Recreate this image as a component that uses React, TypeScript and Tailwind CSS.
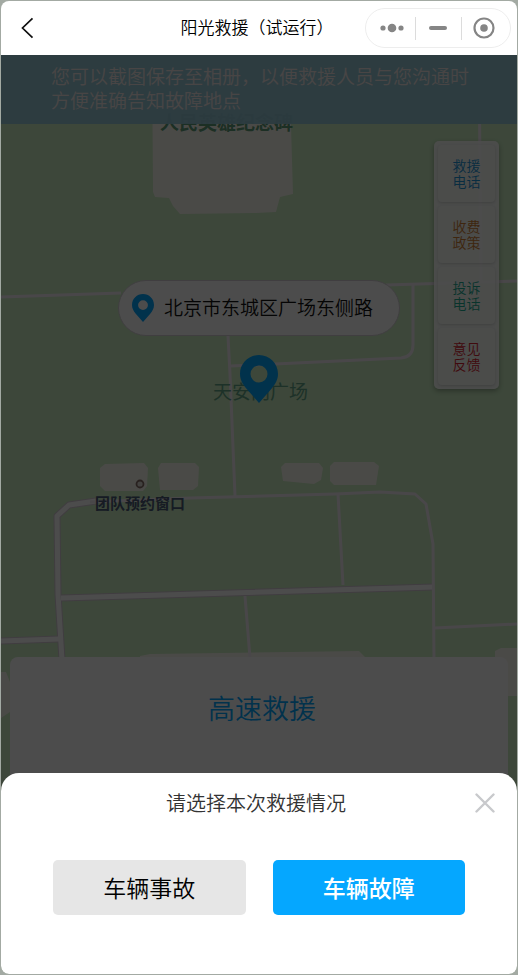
import { useState } from 'react';

const contacts = [
  { label: '救援电话', color: 'text-[#2196d9]' },
  { label: '收费政策', color: 'text-[#d08032]' },
  { label: '投诉电话', color: 'text-[#1fae95]' },
  { label: '意见反馈', color: 'text-[#d8232f]' },
];

function Pin({ className }: { className: string }) {
  return (
    <svg viewBox="0 0 38 48" className={className} fill="#05a7ff" aria-hidden="true">
      <path
        fillRule="evenodd"
        d="M19 0C8.500 0 0 8.300 0 18.800c0 6 2.600 10.200 6.500 15L19 48l12.500-14.200c3.900-4.800 6.500-9 6.500-15C38 8.300 29.500 0 19 0zm0 10.500a8.500 8.500 0 1 1 0 17 8.500 8.500 0 0 1 0-17z"
      />
    </svg>
  );
}

function Header() {
  return (
    <header className="relative flex h-[54px] shrink-0 items-center justify-center bg-white">
      <button type="button" aria-label="返回" className="absolute left-[18px] flex h-8 w-4 items-center">
        <svg viewBox="0 0 16 24" className="h-6 w-4" fill="none" stroke="#111" strokeWidth="1.700">
          <path d="M13.500 2.300 3.500 12l10 9.700" />
        </svg>
      </button>
      <h1 className="pr-1 pb-[2px] text-[17px] leading-6 font-[350] text-black">阳光救援（试运行）</h1>
      <div className="absolute right-[6px] flex h-10 w-[146px] items-center rounded-full border border-[#ededed]">
        <button type="button" aria-label="更多" className="flex flex-1 justify-center pl-1">
          <svg viewBox="0 0 24 10" className="h-[10px] w-6" fill="#858585">
            <circle cx="3" cy="5" r="2.600" />
            <circle cx="12" cy="5" r="4.300" />
            <circle cx="21" cy="5" r="2.600" />
          </svg>
        </button>
        <span className="h-[23px] w-px bg-[#dcdcdc]" />
        <button type="button" aria-label="最小化" className="flex w-[45px] justify-center">
          <svg viewBox="0 0 18 4" className="h-1 w-[18px]">
            <rect width="18" height="4" rx="2" fill="#858585" />
          </svg>
        </button>
        <span className="h-[23px] w-px bg-[#dcdcdc]" />
        <button type="button" aria-label="关闭小程序" className="flex flex-1 justify-center pr-1">
          <svg viewBox="0 0 22 22" className="size-[22px]">
            <circle cx="11" cy="11" r="9.500" fill="none" stroke="#858585" strokeWidth="2.200" />
            <circle cx="11" cy="11" r="3.800" fill="#858585" />
          </svg>
        </button>
      </div>
    </header>
  );
}

function MapView() {
  return (
    <svg
      viewBox="1 55 516 919"
      preserveAspectRatio="xMidYMin slice"
      className="absolute inset-0 h-full w-full bg-[#cbeec2]"
      aria-hidden="true"
    >
      <g fill="#fbf8f0" fillOpacity="0.95">
        <path d="M152 55h138l1 70 2 69-13 3-4 15-20 1-76 1-7-8-4-8-14-1-2-5z" />
        <path d="M105 464l39-1 4 5-1 18-4 5h-38l-5-5v-18z" />
        <path d="M161 463h34l4 4-1 19-5 4h-33l-2-22z" />
        <path d="M285 463h34l4 5-2 12-7 4-31-3-2-14z" />
        <path d="M334 462h40l5 4-3 19h-42l-4-4v-15z" />
        <path d="M140 656l10-2 209-3 7 7-226 3z" />
        <path d="M495 651l6-3h16v48h-10l-12-10z" />
        <path d="M1 672h5l4 10v30l-9 6z" />
      </g>
      <g fill="none" stroke="#d7cbd7" strokeLinejoin="round">
        <path d="M1 641l58-2M61 598l373-11" strokeWidth="7" />
        <path d="M62 660l-4-66-1-78 12-11 27-4" strokeWidth="7" />
      </g>
      <g fill="none" stroke="#fff" strokeLinejoin="round">
        <path d="M1 641l58-2M61 598l373-11" strokeWidth="5" />
        <path d="M62 660l-4-66-1-78 12-11 27-4" strokeWidth="5" />
      </g>
      <g fill="none" stroke="#f5eef5" strokeWidth="3" strokeLinejoin="round">
        <path d="M90 502l100-4 145-4 45-2 35 2 11 10 7 40 1 116" />
        <path d="M228 336l2 38 5 122M231 366l170-8q12-1 12-13v-60" />
        <path d="M1 297l120-4M386 285l131-4M479 55l2 227" />
        <path d="M338 494l5 91M245 596l5 62M435 628l82-4" />
      </g>
      <circle cx="140" cy="484" r="3.500" fill="#e0dcd6" stroke="#86716a" strokeWidth="1.800" />
      <text x="160" y="130" fontSize="19" fontWeight="700" fill="#5f9d79">人民英雄纪念碑</text>
      <text x="213" y="399" fontSize="19" fill="#62a586">天安门广场</text>
      <text x="95" y="509" fontSize="15" fontWeight="700" fill="#4b5a77">团队预约窗口</text>
    </svg>
  );
}

function ContactPanel() {
  return (
    <nav className="absolute top-[86px] right-[18px] flex w-[65px] flex-col gap-1 rounded-[5px] bg-white/90 p-1 shadow-[0_2px_5px_rgba(0,0,0,0.3)]">
      {contacts.map((item) => (
        <button
          key={item.label}
          type="button"
          className={`flex h-[57px] items-center justify-center rounded pb-[2px] text-[14px] leading-4 font-[350] shadow-[0_1px_3px_rgba(0,0,0,0.15)] ${item.color}`}
        >
          <span className="w-7">{item.label}</span>
        </button>
      ))}
    </nav>
  );
}

function RescueSheet({ onClose }: { onClose: () => void }) {
  const [selected, setSelected] = useState('fault');

  const options = [
    { id: 'accident', label: '车辆事故' },
    { id: 'fault', label: '车辆故障' },
  ];

  return (
    <div className="absolute inset-0 flex flex-col justify-end bg-black/70">
      <section role="dialog" aria-labelledby="sheet-title" className="relative rounded-t-[18px] bg-white px-[52px] pt-[18px] pb-[59px]">
        <h2 id="sheet-title" className="pr-[6px] text-center text-[20px] leading-6 font-[350] text-[#333]">
          请选择本次救援情况
        </h2>
        <button type="button" aria-label="关闭" onClick={onClose} className="absolute top-5 right-[22px]">
          <svg viewBox="0 0 20 20" className="size-5" stroke="#c8c9cc" strokeWidth="2.400" strokeLinecap="round">
            <path d="M1.500 1.500l17 17M18.500 1.500l-17 17" />
          </svg>
        </button>
        <div className="mt-[45px] flex gap-[27px]">
          {options.map((option) => (
            <button
              key={option.id}
              type="button"
              onClick={() => setSelected(option.id)}
              className={`h-[55px] flex-1 rounded-[5px] pb-[2px] text-[23px] leading-7 ${
                selected === option.id ? 'bg-[#05a7ff] font-medium text-white' : 'bg-[#e6e6e6] font-[350] text-black'
              }`}
            >
              {option.label}
            </button>
          ))}
        </div>
      </section>
    </div>
  );
}

function App() {
  const [open, setOpen] = useState(true);

  return (
    <div className="flex min-h-screen bg-[#a3aaa3] p-px font-['Noto_Sans_CJK_SC',sans-serif]">
      <div className="flex min-w-0 flex-1 flex-col overflow-hidden rounded-lg">
        <Header />
        <main className="relative flex flex-1 flex-col">
          <MapView />
          <p className="relative bg-[#92c6d6]/95 pt-[9px] pb-3 pl-[50px] text-[19px] leading-6 font-[350] text-[#f0e8e8]">
            您可以截图保存至相册，以便救援人员与您沟通时
            <br />
            方便准确告知故障地点
          </p>
          <div className="relative mt-[156px] flex h-[56px] items-center gap-[10px] self-center rounded-full border border-[#d6d0d6] bg-white pr-[26px] pl-[13px]">
            <Pin className="h-[30px] w-[22px]" />
            <span className="pb-[2px] text-[19px] leading-6 font-[350] text-[#111]">北京市东城区广场东侧路</span>
          </div>
          <Pin className="relative mt-[19px] h-12 w-[38px] self-center" />
          <ContactPanel />
          <div className="relative mx-[9px] mt-auto h-[317px] rounded-t-lg bg-white pt-[33px]">
            <h2 className="pl-[6px] text-center text-[27px] leading-9 font-[350] text-[#05a7ff]">高速救援</h2>
          </div>
          {open && <RescueSheet onClose={() => setOpen(false)} />}
        </main>
      </div>
    </div>
  );
}

export default App;
